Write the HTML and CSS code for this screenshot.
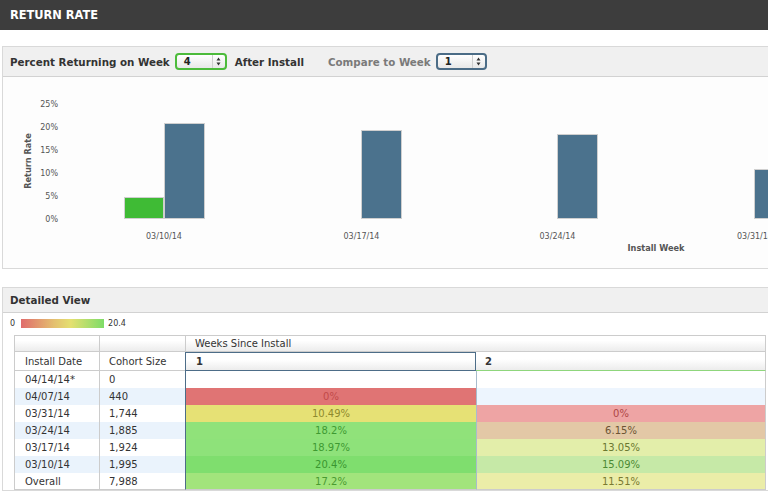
FILE: index.html
```html
<!DOCTYPE html>
<html>
<head>
<meta charset="utf-8">
<title>Return Rate</title>
<link rel="stylesheet" href="styles.css">
</head>
<body>
<div class="topbar">RETURN RATE</div>
<div class="page">
  <section class="panel">
    <div class="panel-head head-tall">
      <span>Percent Returning on Week</span>
      <div class="sel sel-green"><span class="sel-val">4</span><span class="sel-arrows"><svg width="5" height="9" viewBox="0 0 5 9"><path d="M2.5 0.5 L4.5 3.5 L0.5 3.5 Z M2.5 8.5 L4.5 5.5 L0.5 5.5 Z" fill="#333"/></svg></span></div>
      <span class="after">After Install</span>
      <span class="compare">Compare to Week</span>
      <div class="sel sel-blue"><span class="sel-val">1</span><span class="sel-arrows"><svg width="5" height="9" viewBox="0 0 5 9"><path d="M2.5 0.5 L4.5 3.5 L0.5 3.5 Z M2.5 8.5 L4.5 5.5 L0.5 5.5 Z" fill="#333"/></svg></span></div>
    </div>
    <div class="chart">
      <svg width="765" height="191" viewBox="0 0 765 191" class="chart-svg">
        <g transform="translate(-3,-77)">
          <g class="ytick" text-anchor="end">
            <text x="58" y="106.5">25%</text>
            <text x="58" y="129.5">20%</text>
            <text x="58" y="152.5">15%</text>
            <text x="58" y="175.5">10%</text>
            <text x="58" y="198.5">5%</text>
            <text x="58" y="221.5">0%</text>
          </g>
          <text class="axis-title" transform="translate(30.5,161) rotate(-90)" text-anchor="middle">Return Rate</text>
          <rect x="124.5" y="197.5" width="39" height="21" fill="#3fbb35" stroke="#cfcfcf"/>
          <rect x="164.5" y="123.5" width="40" height="95" fill="#4b728d" stroke="#cfcfcf"/>
          <rect x="361.5" y="130.5" width="40" height="88" fill="#4b728d" stroke="#cfcfcf"/>
          <rect x="557.5" y="134.5" width="40" height="84" fill="#4b728d" stroke="#cfcfcf"/>
          <rect x="754.5" y="169.5" width="40" height="49" fill="#4b728d" stroke="#cfcfcf"/>
          <g class="xtick" text-anchor="middle">
            <text x="164" y="239">03/10/14</text>
            <text x="361.5" y="239">03/17/14</text>
            <text x="557.5" y="239">03/24/14</text>
            <text x="755" y="239">03/31/14</text>
          </g>
          <text class="axis-title" x="656" y="250.5" text-anchor="middle">Install Week</text>
        </g>
      </svg>
    </div>
  </section>

  <section class="panel panel-detail">
    <div class="panel-head head-short">Detailed View</div>
    <div class="legend">
      <span>0</span>
      <span class="legend-bar"></span>
      <span>20.4</span>
    </div>
    <table class="cohort">
      <colgroup>
        <col class="c-date"><col class="c-size"><col class="c-week"><col class="c-week2">
      </colgroup>
      <thead>
        <tr class="hrow1">
          <th class="first"></th>
          <th></th>
          <th colspan="2" class="span-head">Weeks Since Install</th>
        </tr>
        <tr class="hrow2">
          <th class="first">Install Date</th>
          <th class="pre-week">Cohort Size</th>
          <th class="wk1-head">1</th>
          <th class="wk2-head">2</th>
        </tr>
      </thead>
      <tbody>
        <tr>
          <td class="first">04/14/14*</td><td class="pre-week">0</td><td class="wk1"></td><td class="wk2"></td>
        </tr>
        <tr class="alt">
          <td class="first">04/07/14</td><td class="pre-week">440</td><td class="wk1" style="background:#e07474;color:#c24a4a">0%</td><td class="wk2" style="background:#edf5fe"></td>
        </tr>
        <tr>
          <td class="first">03/31/14</td><td class="pre-week">1,744</td><td class="wk1" style="background:#e6e175;color:#8e8a2e">10.49%</td><td class="wk2" style="background:#eea4a4;color:#ae4646">0%</td>
        </tr>
        <tr class="alt">
          <td class="first">03/24/14</td><td class="pre-week">1,885</td><td class="wk1" style="background:#90e27a;color:#3e9a32">18.2%</td><td class="wk2" style="background:#e3c8a6;color:#6c5434">6.15%</td>
        </tr>
        <tr>
          <td class="first">03/17/14</td><td class="pre-week">1,924</td><td class="wk1" style="background:#8ee27a;color:#3e9a32">18.97%</td><td class="wk2" style="background:#e3eeaa;color:#6a7830">13.05%</td>
        </tr>
        <tr class="alt">
          <td class="first">03/10/14</td><td class="pre-week">1,995</td><td class="wk1" style="background:#7fde6e;color:#3a9630">20.4%</td><td class="wk2" style="background:#c6e9a7;color:#4c8a34">15.09%</td>
        </tr>
        <tr>
          <td class="first">Overall</td><td class="pre-week">7,988</td><td class="wk1" style="background:#a2e47c;color:#4a9a30">17.2%</td><td class="wk2" style="background:#ebeda8;color:#7a7a30">11.51%</td>
        </tr>
      </tbody>
    </table>
  </section>
</div>
</body>
</html>
```

FILE: styles.css
```css
* { box-sizing: border-box; }

body {
  margin: 0;
  width: 768px;
  height: 493px;
  overflow: hidden;
  background: #fff;
  color: #333;
  font-family: "DejaVu Sans", Verdana, sans-serif;
}

.topbar {
  height: 30px;
  background: #3d3d3d;
  color: #fff;
  font-weight: bold;
  font-size: 11.4px;
  padding-left: 10px;
  display: flex;
  align-items: center;
}

.page {
  padding: 16px 0 0 2px;
}

.panel {
  width: 790px;
  border: 1px solid #d9d9d9;
  background: #fff;
}

.panel + .panel {
  margin-top: 18px;
}

.panel-head {
  display: flex;
  align-items: center;
  background: #f0f0f0;
  border-bottom: 1px solid #d2d2d2;
  padding-left: 7px;
  font-weight: bold;
  font-size: 10.3px;
  color: #333;
  white-space: nowrap;
}

.head-tall { height: 30px; }
.head-short { height: 25px; }

.sel {
  display: flex;
  align-items: center;
  height: 17px;
  border-radius: 4px;
  border: 2px solid #4cbb3b;
  background: linear-gradient(#ffffff, #e8e8e8);
  font-size: 10px;
  font-weight: bold;
  color: #222;
}

.sel-green {
  width: 52px;
  margin-left: 5px;
}

.sel-blue {
  width: 51px;
  margin-left: 5px;
  border-color: #4b6c86;
}

.sel-val {
  flex: 1;
  padding-left: 7px;
}

.sel-arrows {
  width: 13px;
  height: 100%;
  border-left: 1px solid #cfcfcf;
  display: flex;
  align-items: center;
  justify-content: center;
}

.sel-arrows svg { display: block; }

.after { margin-left: 8px; }

.compare {
  margin-left: 24px;
  color: #7a7a7a;
}

.chart {
  height: 191px;
  background: #fdfdfd;
}

.chart-svg { display: block; }

.ytick text,
.xtick text {
  font-size: 8px;
  fill: #555;
}

.axis-title {
  font-size: 8.2px;
  font-weight: bold;
  fill: #555;
}

.legend {
  height: 21px;
  display: flex;
  align-items: center;
  padding-left: 7px;
  font-size: 8px;
  color: #333;
}

.legend-bar {
  width: 83px;
  height: 9px;
  margin: 0 4px 0 6px;
  background: linear-gradient(to right, #e06c6c, #e4c070 40%, #e4e070 60%, #7edc68);
}

.cohort {
  margin: 1px 0 0 11px;
  width: 752px;
  table-layout: fixed;
  border-collapse: separate;
  border-spacing: 0;
  font-size: 10px;
  color: #333;
  border-top: 1px solid #cccccc;
}

.c-date { width: 85px; }
.c-size { width: 86px; }
.c-week { width: 291px; }
.c-week2 { width: 290px; }

.cohort th,
.cohort td {
  padding: 0 0 0 9px;
  text-align: left;
  font-weight: normal;
  white-space: nowrap;
  vertical-align: middle;
  border-left: 1px solid #cccccc;
}

.cohort th.first,
.cohort td.first {
  padding-left: 10px;
}

.hrow1 th {
  height: 16px;
  border-bottom: 1px solid #cccccc;
  background: linear-gradient(#ffffff 30%, #ececec);
}

.hrow1 th.span-head {
  border-right: 1px solid #cccccc;
}

.hrow2 th {
  height: 19px;
  border-bottom: 1px solid #cccccc;
  background: #fff;
}

.hrow2 th.wk1-head {
  border: 1px solid #4d6d88;
  font-weight: bold;
  padding-left: 10px;
  background: linear-gradient(#ffffff 40%, #ececec);
}

.hrow2 th.wk2-head {
  border-left: none;
  border-right: 1px solid #cccccc;
  border-bottom: 1px solid #8fd67c;
  font-weight: bold;
  padding-left: 9px;
  background: linear-gradient(#ffffff 40%, #ececec);
}

.cohort td {
  height: 17px;
}

.cohort tbody tr:last-child td {
  border-bottom: 1px solid #cccccc;
}

.cohort tr.alt td.first,
.cohort tr.alt td.pre-week {
  background: #eaf3fc;
}

.cohort td.wk1 {
  border-left: 1px solid #4d6d88;
  text-align: center;
  padding: 0;
}

.cohort td.wk2 {
  border-left: 1px solid #a8bccd;
  border-right: 1px solid #cccccc;
  text-align: center;
  padding: 0;
}
```
